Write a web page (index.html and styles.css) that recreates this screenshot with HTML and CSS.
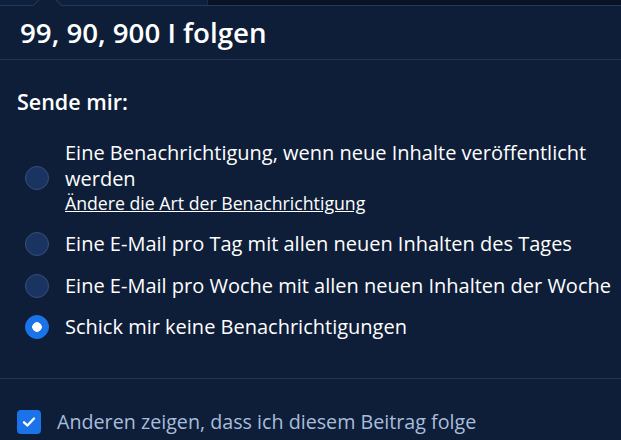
FILE: index.html
```html
<!DOCTYPE html>
<html lang="de">
<head>
  <meta charset="UTF-8" />
  <title>Folgen</title>
  <link rel="stylesheet" href="styles.css">
</head>
<body>
  <div class="topbar">
    <div class="tab"></div>
    <div class="rest"></div>
  </div>

  <div class="popover">
    <span class="arrow"></span>
    <div class="pop-header">
      <h2>99, 90, 900 I folgen</h2>
    </div>

    <div class="pop-body">
      <h3>Sende mir:</h3>
      <form class="options">
        <label class="option">
          <input type="radio" name="notify" value="push">
          <span class="option-text">
            Eine Benachrichtigung, wenn neue Inhalte veröffentlicht werden
            <a href="#" class="option-link">Ändere die Art der Benachrichtigung</a>
          </span>
        </label>
        <label class="option">
          <input type="radio" name="notify" value="daily">
          <span class="option-text">Eine E-Mail pro Tag mit allen neuen Inhalten des Tages</span>
        </label>
        <label class="option">
          <input type="radio" name="notify" value="weekly">
          <span class="option-text nowrap">Eine E-Mail pro Woche mit allen neuen Inhalten der Woche</span>
        </label>
        <label class="option">
          <input type="radio" name="notify" value="none" checked>
          <span class="option-text">Schick mir keine Benachrichtigungen</span>
        </label>
      </form>
    </div>

    <div class="pop-footer">
      <label class="check">
        <input type="checkbox" checked>
        <span class="check-box">
          <svg width="16" height="16" viewBox="0 0 16 16"><path d="M3 8.3 L6.4 11.5 L13 4.5" fill="none" stroke="#fff" stroke-width="2.4" stroke-linecap="round" stroke-linejoin="round"/></svg>
        </span>
        <span>Anderen zeigen, dass ich diesem Beitrag folge</span>
      </label>
    </div>
  </div>
</body>
</html>
```

FILE: styles.css
```css
body {
  margin: 0;
  background-color: #0e1e38;
  font-family: "Open Sans", "Noto Sans", sans-serif;
  color: #ffffff;
}

.topbar {
  display: flex;
  height: 5px;
}

.topbar .tab {
  width: 207px;
  background-color: #0f203c;
  border-right: 1px solid #1a2c4a;
}

.topbar .rest {
  flex: 1;
  background-color: #0a1325;
}

.popover {
  position: relative;
  border-top: 1px solid #223a5e;
}

.arrow {
  position: absolute;
  top: -11px;
  left: 37px;
  width: 21px;
  height: 21px;
  box-sizing: border-box;
  background-color: #0e1e38;
  border-top: 1px solid #223a5e;
  border-left: 1px solid #223a5e;
  transform: rotate(45deg);
}

.pop-header {
  padding: 8px 20px 9px;
  border-bottom: 1px solid #1f3456;
}

.pop-header h2 {
  margin: 0;
  font-size: 27.7px;
  font-weight: 600;
  line-height: 36px;
}

.pop-body {
  padding: 27.5px 0 37.5px 17px;
  border-bottom: 1px solid #1f3456;
}

.pop-body h3 {
  margin: 0 0 24.5px;
  font-size: 21.5px;
  font-weight: 600;
  line-height: 28px;
}

.options {
  display: flex;
  flex-direction: column;
  gap: 15.5px;
}

.option {
  display: flex;
  align-items: center;
  gap: 16px;
  font-size: 20px;
  line-height: 26px;
  padding-left: 8px;
}

.option input {
  appearance: none;
  margin: 0;
  flex: none;
  width: 24px;
  height: 24px;
  border-radius: 50%;
  background-color: #1b3360;
  border: 1px solid #34507c;
  box-sizing: border-box;
}

.option input:checked {
  background-color: #1a73e8;
  border-color: #1a73e8;
  background-image: radial-gradient(circle, #ffffff 0 4.5px, transparent 5px);
}

.option-text.nowrap {
  white-space: nowrap;
}

.option-link {
  display: block;
  color: #ffffff;
  font-size: 17.7px;
  line-height: 22px;
  margin-bottom: 1.5px;
}

.pop-footer {
  padding: 30.5px 17px 4px;
}

.check {
  display: flex;
  align-items: center;
  gap: 16px;
  font-size: 19.7px;
  line-height: 26px;
  color: #a8bddc;
}

.check input {
  display: none;
}

.check-box {
  flex: none;
  width: 24px;
  height: 24px;
  border-radius: 4px;
  background-color: #1a73e8;
  display: flex;
  align-items: center;
  justify-content: center;
}
```
